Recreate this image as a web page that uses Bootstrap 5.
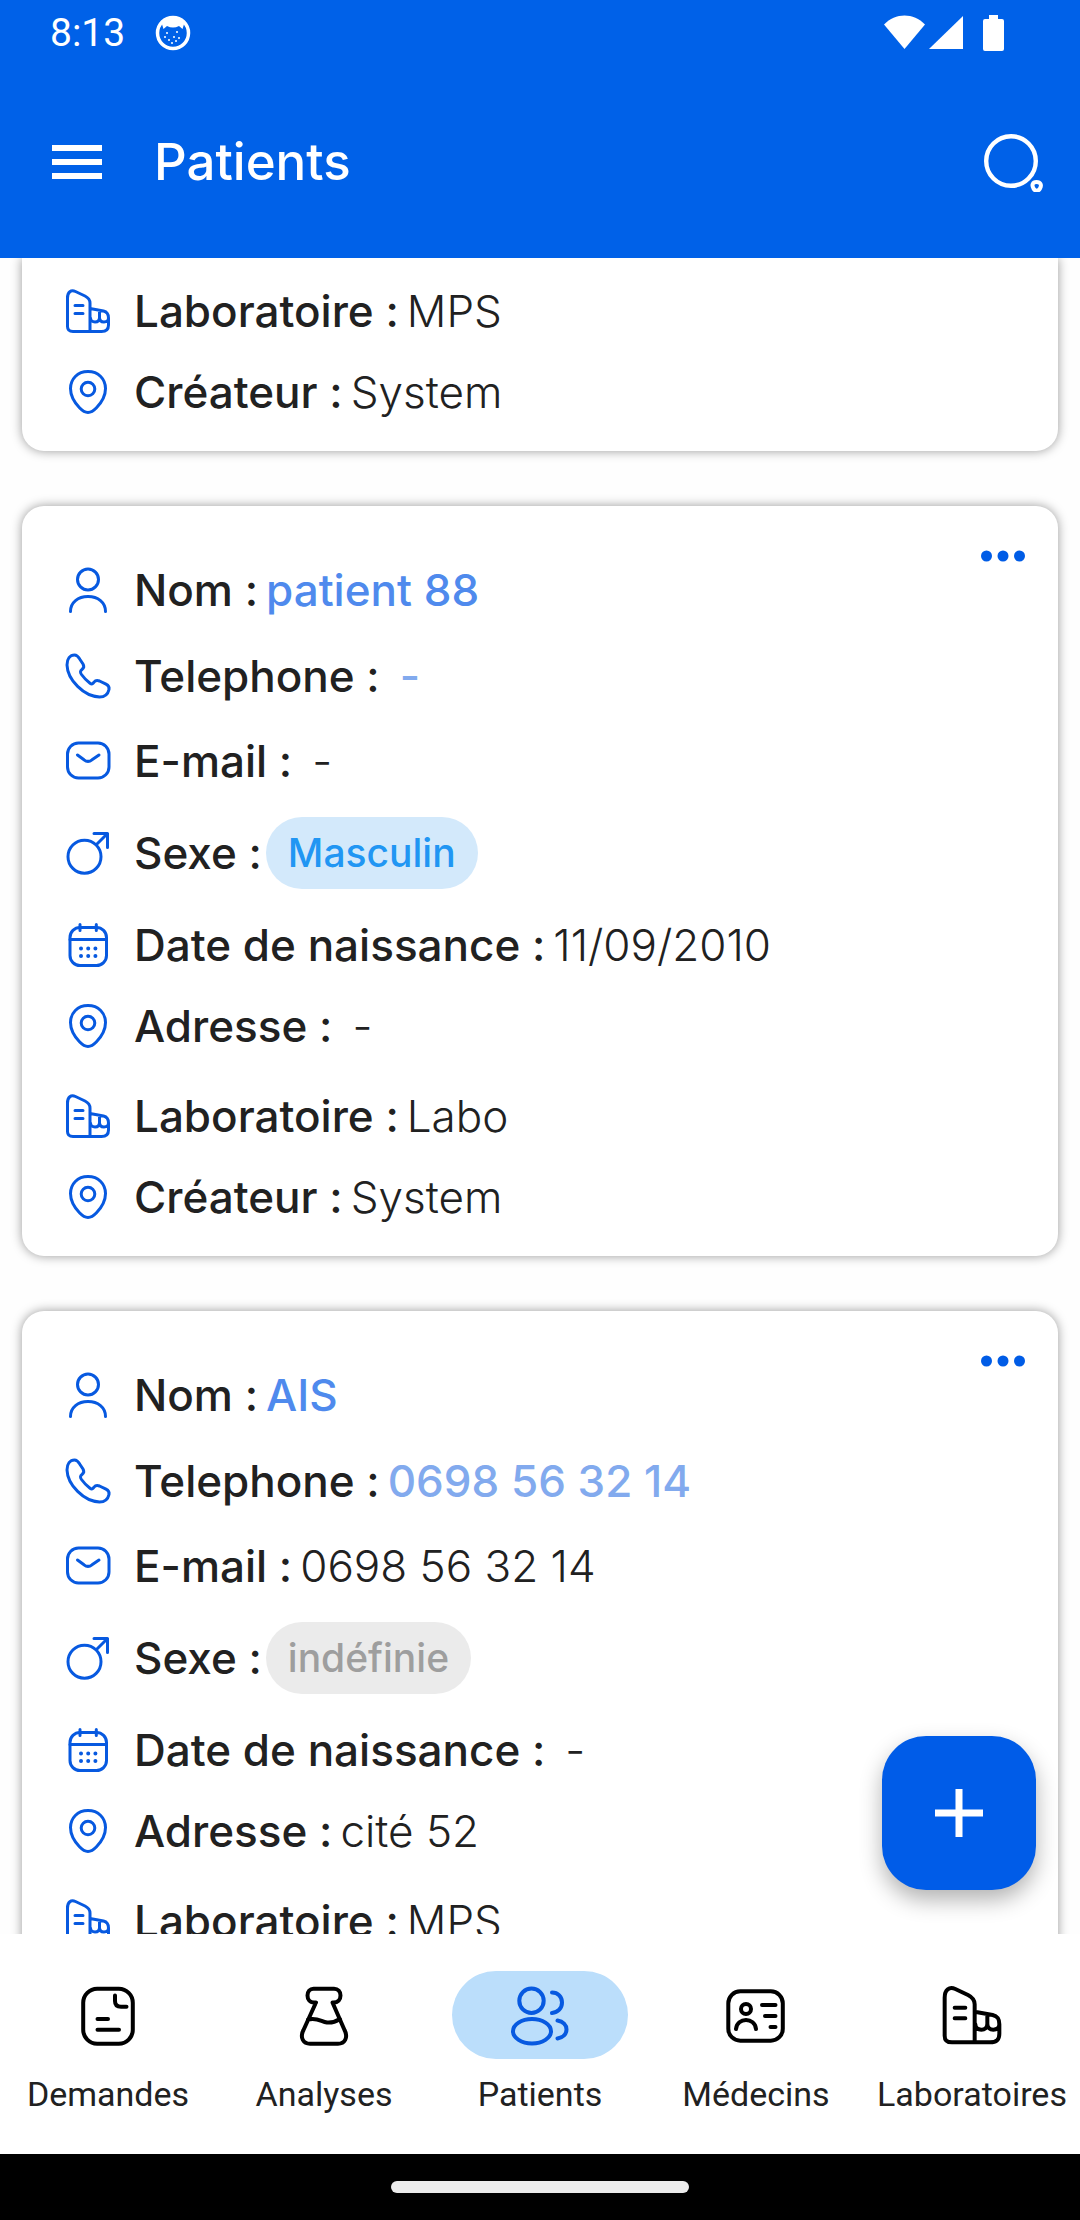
<!DOCTYPE html>
<html lang="fr">
<head>
<meta charset="utf-8">
<meta name="viewport" content="width=device-width, initial-scale=1">
<title>Patients</title>
<link href="https://cdn.jsdelivr.net/npm/bootstrap@5.3.0/dist/css/bootstrap.min.css" rel="stylesheet">
<style>
  :root { --brand: #0061e8; --ink: #212121; }
  body { font-family: Inter, "Open Sans", sans-serif; color: var(--ink); background: #fefefe; }
  svg { display: block; flex: none; fill: none; stroke: currentColor; stroke-linecap: round; stroke-linejoin: round; }
  .status-bar { height: 66px; padding: 0 76px 0 50px; font: 400 39px/66px Roboto, sans-serif; }
  .status-note { margin-left: 18px; }
  .app-head { background: var(--brand); }
  .app-bar { height: 192px; padding: 0 36px 0 52px; }
  .app-title { font-size: 51px; line-height: 60px; font-weight: 500; margin: 0 0 0 52px; }
  .icon-btn { border: 0; padding: 0; background: none; color: inherit; }
  .list-pane { min-height: 0; }
  .patient-list { padding: 0 22px; }
  .patient-card { background: #fff; border-radius: 22px; box-shadow: 0 0 11px rgba(0, 0, 0, .4); padding: 41px 42px 29px; margin-bottom: 55px; }
  .patient-card.cut-top { border-radius: 0 0 22px 22px; padding-top: 2px; }
  .field { height: 86px; font-size: 44px; line-height: 60px; white-space: nowrap; }
  .field svg { width: 48px; height: 48px; stroke-width: 3; color: #0759e0; margin-right: 22px; }
  .field dt { font-weight: 500; margin-right: 8px; }
  .field dd { font-weight: 300; margin: 0; }
  .field dd.none { margin-left: 12px; }
  .field-mid { height: 84px; }
  .field-sex { height: 100px; }
  .field-sex dt { margin-right: 4px; }
  .field-place { height: 78px; }
  .field-lab { height: 102px; }
  .field-last { height: 60px; }
  .field dd.name { font-weight: 500; color: #4f8aed; }
  .field dd.tel { font-weight: 500; }
  .field dd.tel, .field dd.tel a { color: #82aaee; }
  .field dd.tag { border-radius: 36px; padding: 0 22px; font-size: 39px; line-height: 72px; font-weight: 500; }
  .tag-male { background: #d3e9fb; color: #2196f3; }
  .tag-unknown { background: #ebebeb; color: #9e9e9e; }
  .more-btn { top: 38px; right: 32px; color: #005ce6; }
  .fab { right: 44px; bottom: 44px; width: 154px; height: 154px; border: 0; border-radius: 44px; background: #005ce8; color: #fff; box-shadow: 0 10px 22px rgba(0, 0, 0, .3); }
  .tab-bar { height: 220px; padding-top: 37px; background: #fff; }
  .tab-item { flex: 1 1 0; min-width: 0; color: var(--ink); font: 400 34px/40px Roboto, sans-serif; }
  .tab-item svg { width: 64px; height: 64px; stroke-width: 4; color: #000; }
  .tab-item svg.small-grid { stroke-width: 3; }
  .tab-item .tab-mark { width: 176px; height: 88px; border-radius: 44px; margin-bottom: 15px; }
  .tab-item.current .tab-mark { background: #bbdefb; }
  .tab-item.current svg { color: #0759e0; }
  .gesture-bar { height: 66px; background: #000; }
  .gesture-pill { width: 298px; height: 12px; border-radius: 6px; background: #ececec; }
</style>
<script src="https://cdn.jsdelivr.net/npm/bootstrap@5.3.0/dist/js/bootstrap.bundle.min.js"></script>
</head>
<body>
<svg width="0" height="0" class="position-absolute" aria-hidden="true">
  <symbol id="i-user" viewBox="0 0 48 48"><circle cx="24" cy="13.5" r="10.5"/><path d="M6.5 45.5C6.5 36.5 14 30.5 24 30.5S41.5 36.5 41.5 45.5"/></symbol>
  <symbol id="i-phone" viewBox="0 0 48 48"><path d="M3 13C3 7 6 3 10.5 3C13.5 3 14.5 5 16 7.5L19 12C20.5 14.5 20 16 18 17.5C16 19 15.8 20 17.5 22.5C20 26 23 29 26 31.2C27.8 32.5 28.8 32 30 30.2C31.5 28.2 33 28 35.5 29L42 32.2C44.5 33.5 45.5 35 45 37.5C44 42 41 45 35.5 45C20 44.5 3.5 28 3 13Z"/></symbol>
  <symbol id="i-mail" viewBox="0 0 48 48"><rect x="3.5" y="6" width="41.5" height="35" rx="11"/><path d="M13.5 18L20 22.8C22.5 24.8 25.5 24.8 28 22.8L35 18"/></symbol>
  <symbol id="i-sex" viewBox="0 0 48 48"><circle cx="20.5" cy="27.7" r="16.5"/><path d="M32.5 15.5L43.5 4.5M30 4.5H43.5V18.5"/></symbol>
  <symbol id="i-date" viewBox="0 0 48 48"><rect x="6" y="6.5" width="36.5" height="38" rx="10"/><path d="M6 18.5H42.5M16 3.5V9.5M32.3 3.5V9.5"/><path stroke-width="4" d="M17 27.5h.01M24.2 27.5h.01M31.4 27.5h.01M17 35h.01M24.2 35h.01M31.4 35h.01"/></symbol>
  <symbol id="i-pin" viewBox="0 0 48 48"><path d="M24 3.5C13.5 3.5 6.5 11 6.5 20.5C6.5 28 10 34 15.5 39.8C18.5 43 21 44.5 24 44.5S29.5 43 32.5 39.8C38 34 41.5 28 41.5 20.5C41.5 11 34.5 3.5 24 3.5Z"/><circle cx="24" cy="21" r="6.8"/></symbol>
  <symbol id="i-lab" viewBox="0 0 48 48"><path d="M26 44.5H9C5 44.5 3.5 43 3.5 39.5V11C3.5 5 7 2.5 11.5 4.5L21 9C24.5 10.8 26 12.5 26 16V44.5H37.5C42.5 44.5 44.5 42.5 44.5 38V31C44.5 27 43.5 25 39.5 24L26 21.5M11 18.5H19M11 26.5H19M35.5 23.5V30.5M26.5 31C26.5 33.5 28.5 35 31 35S35.5 33.5 35.5 30.5C35.5 33.5 37.5 35 40 35S44.5 33.5 44.5 31"/></symbol>
  <symbol id="i-more" viewBox="0 0 46 24"><g fill="currentColor" stroke="none"><circle cx="6.5" cy="12" r="5.5"/><circle cx="23" cy="12" r="5.5"/><circle cx="39.5" cy="12" r="5.5"/></g></symbol>
</svg>

<div class="vh-100 d-flex flex-column overflow-hidden">
  <header class="app-head text-white flex-shrink-0">
    <div class="status-bar d-flex align-items-center">
      <span>8:13</span>
      <svg class="status-note" width="48" height="40" viewBox="0 0 48 40" aria-hidden="true"><circle cx="30" cy="20" r="15.5" stroke-width="3.5"/><path fill="#fff" stroke="none" d="M18 8Q30 0 42 8L39.5 16L36 13Q30 16 24 13L20.5 16Z"/><path stroke-width="2" d="M22 24h.01M26 27h.01M31 24h.01M34 19h.01M29 30h.01M36 25h.01M24 20h.01M33 28h.01"/></svg>
      <svg class="ms-auto" width="120" height="40" viewBox="0 0 120 40" aria-hidden="true"><g fill="#fff" stroke="none"><path d="M0 11.5C11.5-.5 29.5-.5 41 11.5L20.5 36Z"/><path d="M45 36L79 3V36Z"/><path d="M105 2h9v4h4q2 0 2 2v28q0 2-2 2h-17q-2 0-2-2V8q0-2 2-2h4z"/></g></svg>
    </div>
    <div class="app-bar d-flex align-items-center">
      <button type="button" class="icon-btn" aria-label="Menu"><svg width="50" height="34" viewBox="0 0 50 34"><path fill="#fff" stroke="none" d="M0 0h50v6H0zM0 14h50v6H0zM0 28h50v6H0z"/></svg></button>
      <h1 class="app-title">Patients</h1>
      <button type="button" class="icon-btn ms-auto" aria-label="Rechercher"><svg width="60" height="60" viewBox="0 0 60 60"><circle cx="27" cy="29" r="24.8" stroke-width="4.4"/><path stroke-width="4" d="M52.5 50C56.5 50 58 53 56 56.500C54.500 59.500 51 59.500 49.500 56.500C47.500 53 48.500 50 52.500 50Z"/></svg></button>
    </div>
  </header>

  <main class="list-pane flex-grow-1 position-relative overflow-hidden">
    <div class="patient-list">
      <article class="patient-card cut-top">
        <dl class="m-0">
          <div class="field field-lab d-flex align-items-center"><svg><use href="#i-lab"/></svg><dt>Laboratoire :</dt><dd>MPS</dd></div>
          <div class="field field-last d-flex align-items-center"><svg><use href="#i-pin"/></svg><dt>Créateur :</dt><dd>System</dd></div>
        </dl>
      </article>

      <article class="patient-card position-relative">
        <button type="button" class="icon-btn more-btn position-absolute" aria-label="Plus d'actions"><svg width="46" height="24"><use href="#i-more"/></svg></button>
        <dl class="m-0">
          <div class="field d-flex align-items-center"><svg><use href="#i-user"/></svg><dt>Nom :</dt><dd class="name">patient 88</dd></div>
          <div class="field d-flex align-items-center"><svg><use href="#i-phone"/></svg><dt>Telephone :</dt><dd class="tel none">-</dd></div>
          <div class="field field-mid d-flex align-items-center"><svg><use href="#i-mail"/></svg><dt>E-mail :</dt><dd class="none">-</dd></div>
          <div class="field field-sex d-flex align-items-center"><svg><use href="#i-sex"/></svg><dt>Sexe :</dt><dd class="tag tag-male">Masculin</dd></div>
          <div class="field field-mid d-flex align-items-center"><svg><use href="#i-date"/></svg><dt>Date de naissance :</dt><dd>11/09/2010</dd></div>
          <div class="field field-place d-flex align-items-center"><svg><use href="#i-pin"/></svg><dt>Adresse :</dt><dd class="none">-</dd></div>
          <div class="field field-lab d-flex align-items-center"><svg><use href="#i-lab"/></svg><dt>Laboratoire :</dt><dd>Labo</dd></div>
          <div class="field field-last d-flex align-items-center"><svg><use href="#i-pin"/></svg><dt>Créateur :</dt><dd>System</dd></div>
        </dl>
      </article>

      <article class="patient-card position-relative">
        <button type="button" class="icon-btn more-btn position-absolute" aria-label="Plus d'actions"><svg width="46" height="24"><use href="#i-more"/></svg></button>
        <dl class="m-0">
          <div class="field d-flex align-items-center"><svg><use href="#i-user"/></svg><dt>Nom :</dt><dd class="name">AIS</dd></div>
          <div class="field d-flex align-items-center"><svg><use href="#i-phone"/></svg><dt>Telephone :</dt><dd class="tel"><a class="text-decoration-none" href="tel:0698563214">0698 56 32 14</a></dd></div>
          <div class="field field-mid d-flex align-items-center"><svg><use href="#i-mail"/></svg><dt>E-mail :</dt><dd>0698 56 32 14</dd></div>
          <div class="field field-sex d-flex align-items-center"><svg><use href="#i-sex"/></svg><dt>Sexe :</dt><dd class="tag tag-unknown">indéfinie</dd></div>
          <div class="field field-mid d-flex align-items-center"><svg><use href="#i-date"/></svg><dt>Date de naissance :</dt><dd class="none">-</dd></div>
          <div class="field field-place d-flex align-items-center"><svg><use href="#i-pin"/></svg><dt>Adresse :</dt><dd>cité 52</dd></div>
          <div class="field field-lab d-flex align-items-center"><svg><use href="#i-lab"/></svg><dt>Laboratoire :</dt><dd>MPS</dd></div>
        </dl>
      </article>
    </div>
    <button type="button" class="fab position-absolute d-flex align-items-center justify-content-center" aria-label="Ajouter un patient"><svg width="48" height="48" viewBox="0 0 48 48"><path fill="#fff" stroke="none" d="M20.5 0h7v20.5H48v7H27.5V48h-7V27.5H0v-7h20.5z"/></svg></button>
  </main>

  <nav class="tab-bar d-flex flex-shrink-0">
    <a href="#demandes" class="tab-item d-flex flex-column align-items-center text-decoration-none"><span class="tab-mark d-flex align-items-center justify-content-center"><svg viewBox="0 0 64 64"><rect x="7.2" y="5.7" width="49.6" height="55" rx="14"/><path d="M39 12.5V18C39 22 41 23.8 45 23.8H50.5M21.5 36H32M21.5 46.7H43"/></svg></span>Demandes</a>
    <a href="#analyses" class="tab-item d-flex flex-column align-items-center text-decoration-none"><span class="tab-mark d-flex align-items-center justify-content-center"><svg viewBox="0 0 64 64"><path d="M24 19.5H22C17.5 19.5 15.5 16 15.5 12.5C15.5 8.5 18 5.7 21.5 5.7H42C46 5.7 48.5 8.5 48.5 12.5S46 19.5 41.5 19.5H40.5L52.5 47C56.5 55 52.5 60.7 46 60.7H18C11.5 60.7 7.5 55 11.5 47L24 19.5M16 36.5C25 34 29 38.5 35 39.5C40 40 44 38.5 48 36"/></svg></span>Analyses</a>
    <a href="#patients" aria-current="page" class="tab-item current d-flex flex-column align-items-center text-decoration-none"><span class="tab-mark d-flex align-items-center justify-content-center"><svg viewBox="0 0 64 64"><circle cx="23.5" cy="17.8" r="12.2"/><ellipse cx="24" cy="48.2" rx="19" ry="12.2"/><path d="M44 9.5C50 9.5 54 13.8 54 19.5S50 29.5 44 30M49.5 37.5C55 38.5 58.5 42 58.5 46.5S55 54.5 49.5 55.5"/></svg></span>Patients</a>
    <a href="#medecins" class="tab-item d-flex flex-column align-items-center text-decoration-none"><span class="tab-mark d-flex align-items-center justify-content-center"><svg viewBox="0 0 64 64"><rect x="4.3" y="8.3" width="54.5" height="49.4" rx="12"/><circle cx="22" cy="26" r="5"/><path d="M12 46C13 34 31 34 32 46M38 22H51.5M41 33H51.5M46.5 44H51.5"/></svg></span>Médecins</a>
    <a href="#laboratoires" class="tab-item d-flex flex-column align-items-center text-decoration-none"><span class="tab-mark d-flex align-items-center justify-content-center"><svg class="small-grid"><use href="#i-lab"/></svg></span>Laboratoires</a>
  </nav>
  <footer class="gesture-bar d-flex align-items-center justify-content-center flex-shrink-0"><div class="gesture-pill"></div></footer>
</div>
</body>
</html>
